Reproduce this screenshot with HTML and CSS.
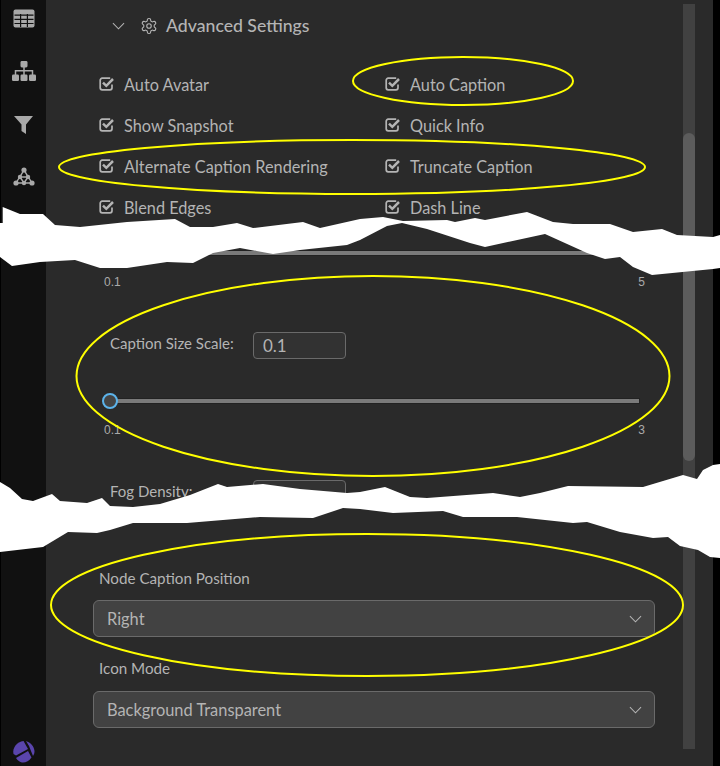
FILE: index.html
```html
<!DOCTYPE html>
<html lang="en">
<head>
<meta charset="utf-8">
<title>Advanced Settings</title>
<link rel="stylesheet" href="styles.css">
</head>
<body>
<svg class="defs" width="0" height="0" aria-hidden="true">
  <symbol id="check" viewBox="0 0 16 16">
    <path d="M13 8.600v3.200a2 2 0 0 1-2 2H3.200a2 2 0 0 1-2-2V4.200a2 2 0 0 1 2-2h8" fill="none" stroke="currentColor" stroke-width="1.700"/>
    <path d="M4 6.600l3.300 3.200L14 3" fill="none" stroke="currentColor" stroke-width="2.500"/>
  </symbol>
  <symbol id="chev" viewBox="0 0 14 8">
    <path d="M1 1l6 6 6-6" fill="none" stroke="currentColor" stroke-width="1.100"/>
  </symbol>
</svg>
<div class="app">
  <nav class="sidebar">
    <svg class="nav-icon table" viewBox="0 0 22 19" width="22" height="19">
      <rect x=".5" y=".5" width="21" height="18" rx="2" fill="#a9a9a9"/>
      <path d="M1.500 6.200h19M1.500 10.400h19M1.500 14.500h19M7.600 5v13M14.400 5v13" stroke="#111" stroke-width="1.200"/>
    </svg>
    <svg class="nav-icon tree" viewBox="0 0 24 20" width="24" height="20">
      <rect x="8.500" y="0" width="7" height="6.500" rx="1.400" fill="#a9a9a9"/>
      <path d="M12 6v8M3.500 14V9.700h17V14" fill="none" stroke="#a9a9a9" stroke-width="1.500"/>
      <rect x="0" y="13.500" width="7" height="6.500" rx="1.200" fill="#a9a9a9"/>
      <rect x="8.500" y="13.500" width="7" height="6.500" rx="1.200" fill="#a9a9a9"/>
      <rect x="17" y="13.500" width="7" height="6.500" rx="1.200" fill="#a9a9a9"/>
    </svg>
    <svg class="nav-icon funnel" viewBox="0 0 19 19" width="19" height="19">
      <path d="M0 0h19l-7 8.500V18l-4.500 -3V8.500z" fill="#a9a9a9"/>
    </svg>
    <svg class="nav-icon graph" viewBox="0 0 22 19" width="22" height="19">
      <path d="M11 3L3 16h16zM11 3l-4 7h8l-4-7zM7 10l4 6 4-6" fill="none" stroke="#a9a9a9" stroke-width="1.400"/>
      <circle cx="11" cy="3" r="2.600" fill="#a9a9a9"/>
      <circle cx="3" cy="16" r="2.600" fill="#a9a9a9"/>
      <circle cx="19" cy="16" r="2.600" fill="#a9a9a9"/>
      <circle cx="11" cy="16" r="2.200" fill="#a9a9a9"/>
      <circle cx="7" cy="10" r="2.200" fill="#a9a9a9"/>
      <circle cx="15" cy="10" r="2.200" fill="#a9a9a9"/>
    </svg>
    <svg class="logo" viewBox="0 0 24 24" width="24" height="24">
      <path d="M1.500 14C0 8 5 1.500 11.500 1L16 9L4 15.500Z" fill="#5a45ad"/>
      <path d="M14 1C18.500 2.500 22 6 22.500 11C22.500 13 22 14.500 21 16L17 6Z" fill="#5a45ad"/>
      <path d="M4 18L16 11L19.500 17.500C17 21.500 13 23 10 22.500C8 22 5.500 20.500 4 18Z" fill="#5a45ad"/>
    </svg>
  </nav>
  <main class="panel">
    <div class="content">
      <header class="section-head">
        <svg class="head-chev" width="13" height="8"><use href="#chev"/></svg>
        <svg class="gear" viewBox="0 0 24 24" width="18" height="18" fill="none" stroke="currentColor" stroke-width="1.500">
          <path d="M12.220 2h-.44a2 2 0 0 0-2 2v.18a2 2 0 0 1-1 1.730l-.43.25a2 2 0 0 1-2 0l-.15-.08a2 2 0 0 0-2.730.73l-.22.38a2 2 0 0 0 .73 2.730l.15.1a2 2 0 0 1 1 1.720v.51a2 2 0 0 1-1 1.740l-.15.09a2 2 0 0 0-.73 2.730l.22.38a2 2 0 0 0 2.730.73l.15-.08a2 2 0 0 1 2 0l.43.25a2 2 0 0 1 1 1.730V20a2 2 0 0 0 2 2h.44a2 2 0 0 0 2-2v-.18a2 2 0 0 1 1-1.730l.43-.25a2 2 0 0 1 2 0l.15.08a2 2 0 0 0 2.730-.73l.22-.39a2 2 0 0 0-.73-2.730l-.15-.08a2 2 0 0 1-1-1.740v-.5a2 2 0 0 1 1-1.740l.15-.09a2 2 0 0 0 .73-2.730l-.22-.38a2 2 0 0 0-2.730-.73l-.15.08a2 2 0 0 1-2 0l-.43-.25a2 2 0 0 1-1-1.730V4a2 2 0 0 0-2-2z"/>
          <circle cx="12" cy="12" r="3"/>
        </svg>
        <span class="head-title">Advanced Settings</span>
      </header>
      <div class="checks">
        <label class="check"><svg width="16" height="16"><use href="#check"/></svg>Auto Avatar</label>
        <label class="check"><svg width="16" height="16"><use href="#check"/></svg>Auto Caption</label>
        <label class="check"><svg width="16" height="16"><use href="#check"/></svg>Show Snapshot</label>
        <label class="check"><svg width="16" height="16"><use href="#check"/></svg>Quick Info</label>
        <label class="check"><svg width="16" height="16"><use href="#check"/></svg>Alternate Caption Rendering</label>
        <label class="check"><svg width="16" height="16"><use href="#check"/></svg>Truncate Caption</label>
        <label class="check"><svg width="16" height="16"><use href="#check"/></svg>Blend Edges</label>
        <label class="check"><svg width="16" height="16"><use href="#check"/></svg>Dash Line</label>
      </div>
      <section class="slider first">
        <div class="track"></div>
        <div class="range"><span>0.1</span><span>5</span></div>
      </section>
      <section class="slider second">
        <div class="field"><span class="field-label">Caption Size Scale:</span><span class="num">0.1</span></div>
        <div class="track with-thumb"><span class="thumb"></span></div>
        <div class="range"><span>0.1</span><span>3</span></div>
      </section>
      <section class="slider third">
        <div class="field"><span class="field-label">Fog Density:</span><span class="num"></span></div>
      </section>
      <section class="select-group">
        <div class="select-label">Node Caption Position</div>
        <div class="select">Right<svg width="13" height="8"><use href="#chev"/></svg></div>
        <div class="select-label second-label">Icon Mode</div>
        <div class="select">Background Transparent<svg width="13" height="8"><use href="#chev"/></svg></div>
      </section>
    </div>
    <div class="scroll"><div class="scroll-thumb"></div></div>
  </main>
</div>
<svg class="overlay" viewBox="0 0 720 766" width="720" height="766" aria-hidden="true">
  <path class="tear" d="M0 223L2.700 223L2.700 207L20 214L43 214L55 225L80 227L127 222L175 219L190 227L213 227L237 223L253 228L303 222L320 228L360 219L383 217L403 221L447 220L455 222L475 218L485 220L527 212L553 222L573 224L610 224L633 232L662 229L677 235L713 237L720 235V268L713 269L652 275L633 267L620 257L605 259L587 253L545 234L485 247L470 243L427 229L402 223L387 226L360 240L347 245L300 250L273 254L240 248L213 253L193 263L167 262L127 268L100 268L75 260L40 262L12 266L0 257Z"/>
  <path class="tear" d="M0 482L10 488L22 499L33 501L52 494L60 501L87 503L102 498L110 506L133 507L160 504L190 495L218 484L227 487L263 484L300 489L347 493L360 492L385 487L410 497L427 498L493 493L520 497L540 493L568 486L643 487L683 475L697 479L703 470L713 465L720 464V558L710 557L698 550L680 546L668 537L653 538L620 532L587 522L573 523L517 517L493 517L463 517L443 511L393 513L360 509L343 508L313 518L260 517L187 523L133 523L110 530L97 533L68 532L43 547L0 552Z"/>
  <ellipse class="mark" cx="463" cy="81" rx="110" ry="24"/>
  <ellipse class="mark" cx="352" cy="167" rx="293" ry="27"/>
  <ellipse class="mark" cx="373" cy="376" rx="296.500" ry="100"/>
  <ellipse class="mark" cx="367" cy="605" rx="316" ry="71"/>
</svg>
</body>
</html>
```

FILE: styles.css
```css
* { box-sizing: border-box; }
html, body { margin: 0; padding: 0; }
body {
  width: 720px;
  height: 766px;
  overflow: hidden;
  position: relative;
  background: #000;
  font-family: Lato, "Noto Sans", sans-serif;
  color: #b4b4b4;
}
.defs { position: absolute; }
.app {
  display: flex;
  height: 766px;
  padding: 0 7px 0 1px;
}
.sidebar {
  width: 45px;
  background: #111;
  display: flex;
  flex-direction: column;
  align-items: center;
  color: #a9a9a9;
}
.nav-icon { display: block; flex: none; }
.table { margin-top: 9px; }
.tree { margin-top: 33px; }
.funnel { margin-top: 35px; }
.graph { margin-top: 32px; }
.logo { margin-top: auto; margin-bottom: 2px; }
.panel {
  flex: 1;
  background: #2a2a2a;
  display: flex;
}
.content { width: 637px; }
.section-head {
  height: 51px;
  padding-left: 66px;
  display: flex;
  align-items: center;
}
.head-chev { flex: none; margin-right: 15px; color: #b4b4b4; }
.gear { flex: none; margin-right: 8px; color: #b4b4b4; }
.head-title { font-size: 17.650px; font-weight: 500; }
.checks {
  margin-top: 12.500px;
  padding-left: 53px;
  display: grid;
  grid-template-columns: 286px 1fr;
  grid-auto-rows: 41px;
}
.check {
  display: flex;
  align-items: center;
  font-size: 16.300px;
  height: 41px;
}
.check svg { flex: none; margin-right: 9px; color: #b4b4b4; }
.slider { padding: 0 38px 0 58px; }
.first { margin-top: 22.500px; }
.second { margin-top: 43px; }
.third { margin-top: 43px; }
.track {
  height: 6px;
  background: #7a7a7a;
  border: 1px solid #222;
  border-left-width: 0;
  margin: 0 5px 0 6px;
  position: relative;
}
.thumb {
  position: absolute;
  left: -8px;
  top: -6px;
  width: 16px;
  height: 16px;
  border-radius: 50%;
  background: #444;
  border: 2px solid #5cb3ea;
}
.range {
  display: flex;
  justify-content: space-between;
  font: 12px "Liberation Sans", sans-serif;
  line-height: 14px;
  margin-top: 19px;
  color: #aaa;
}
.field { display: flex; align-items: center; height: 27px; padding-left: 6px; }
.field-label { width: 143px; font-size: 15px; flex: none; margin-bottom: 6px; }
.num {
  width: 93px;
  height: 27px;
  border: 1px solid #6a6a6a;
  border-radius: 4px;
  background: #323232;
  font-size: 17px;
  line-height: 25px;
  padding-left: 9px;
}
.second .field { margin-bottom: 39px; }
.select-group { padding: 0 28px 0 47px; margin-top: 61px; }
.select-label { font-size: 15.200px; line-height: 20px; padding-left: 6px; margin-bottom: 12px; }
.second-label { margin-top: 21px; margin-bottom: 13px; }
.select {
  height: 37px;
  background: #424242;
  border: 1px solid #6a6a6a;
  border-radius: 6px;
  display: flex;
  align-items: center;
  justify-content: space-between;
  padding: 0 12px 0 13px;
  font-size: 16.400px;
}
.select svg { flex: none; color: #b4b4b4; }
.scroll {
  width: 12px;
  height: 745px;
  margin-top: 4px;
  background: #414141;
  position: relative;
}
.scroll-thumb {
  position: absolute;
  top: 129px;
  left: 0;
  width: 100%;
  height: 328px;
  border-radius: 6px;
  background: #5c5c5c;
}
.overlay { position: absolute; left: 0; top: 0; }
.tear { fill: #fff; }
.mark { fill: none; stroke: #ff0; stroke-width: 2; }
```
